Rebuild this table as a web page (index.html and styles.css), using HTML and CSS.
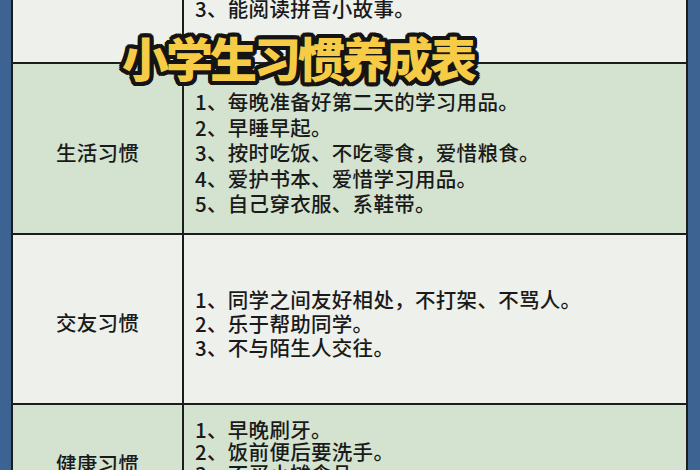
FILE: index.html
```html
<!DOCTYPE html>
<html lang="zh-CN">
<head>
<meta charset="utf-8">
<title>小学生习惯养成表</title>
<link rel="stylesheet" href="styles.css">
</head>
<body>
<div class="page">
  <div class="table">
    <div class="row row1">
      <div class="label"></div>
      <div class="content"><p>3、能阅读拼音小故事。</p></div>
    </div>
    <div class="row row2 green">
      <div class="label">生活习惯</div>
      <div class="content">
        <p>1、每晚准备好第二天的学习用品。</p>
        <p>2、早睡早起。</p>
        <p>3、按时吃饭、不吃零食，爱惜粮食。</p>
        <p>4、爱护书本、爱惜学习用品。</p>
        <p>5、自己穿衣服、系鞋带。</p>
      </div>
    </div>
    <div class="row row3">
      <div class="label">交友习惯</div>
      <div class="content">
        <p>1、同学之间友好相处，不打架、不骂人。</p>
        <p>2、乐于帮助同学。</p>
        <p>3、不与陌生人交往。</p>
      </div>
    </div>
    <div class="row row4 green">
      <div class="label">健康习惯</div>
      <div class="content">
        <p>1、早晚刷牙。</p>
        <p>2、饭前便后要洗手。</p>
        <p>3、不买小摊食品。</p>
      </div>
    </div>
  </div>
  <h1 class="title">小学生习惯养成表</h1>
</div>
</body>
</html>
```
FILE: styles.css
```css
html, body {
  margin: 0;
  padding: 0;
}
body {
  background: #3d6393;
  width: 700px;
  height: 470px;
  overflow: hidden;
  font-family: "Noto Sans CJK SC", "Noto Sans", sans-serif;
  color: #1a1a1a;
}
.page {
  position: relative;
  width: 700px;
  height: 470px;
  overflow: hidden;
}
.table {
  margin: -4px 12px 0 11px;
  border-left: 2px solid #1c1c1c;
  border-right: 2px solid #1c1c1c;
}
.row {
  display: grid;
  grid-template-columns: 171px 1fr;
  background: #eef0eb;
  border-bottom: 2px solid #1c1c1c;
}
.row.green {
  background: #d4e3cf;
}
.label {
  border-right: 2px solid #1c1c1c;
  display: flex;
  align-items: center;
  justify-content: center;
  padding-top: 6px;
  font-size: 20.5px;
  letter-spacing: 0.3px;
  line-height: 24px;
  font-weight: 500;
}
.content {
  padding-left: 11px;
  font-size: 20.5px;
  letter-spacing: 0.3px;
  font-weight: 500;
}
.content p {
  margin: 0;
  white-space: nowrap;
}
.row1 {
  height: 66px;
}
.row1 .content p {
  line-height: 25.5px;
}
.row2 {
  height: 169px;
}
.row2 .content {
  padding-top: 25px;
}
.row2 .content p {
  line-height: 25.5px;
}
.row3 {
  height: 168px;
}
.row3 .content {
  padding-top: 52px;
}
.row3 .content p {
  line-height: 24px;
}
.row4 {
  height: 110px;
}
.row4 .content {
  padding-top: 13px;
}
.row4 .content p {
  line-height: 22px;
}
.title {
  position: absolute;
  left: 122px;
  top: 29px;
  margin: 0;
  font-size: 47px;
  line-height: 56px;
  font-weight: 900;
  color: #f6cb45;
  letter-spacing: -3px;
  white-space: nowrap;
  text-shadow:
    4px 0 0 #141414, -4px 0 0 #141414, 0 4px 0 #141414, 0 -4px 0 #141414,
    3px 3px 0 #141414, -3px 3px 0 #141414, 3px -3px 0 #141414, -3px -3px 0 #141414,
    4px 2px 0 #141414, -4px 2px 0 #141414, 4px -2px 0 #141414, -4px -2px 0 #141414,
    2px 4px 0 #141414, -2px 4px 0 #141414, 2px -4px 0 #141414, -2px -4px 0 #141414,
    0 0 7px rgba(255, 255, 255, 0.5);
}
```
